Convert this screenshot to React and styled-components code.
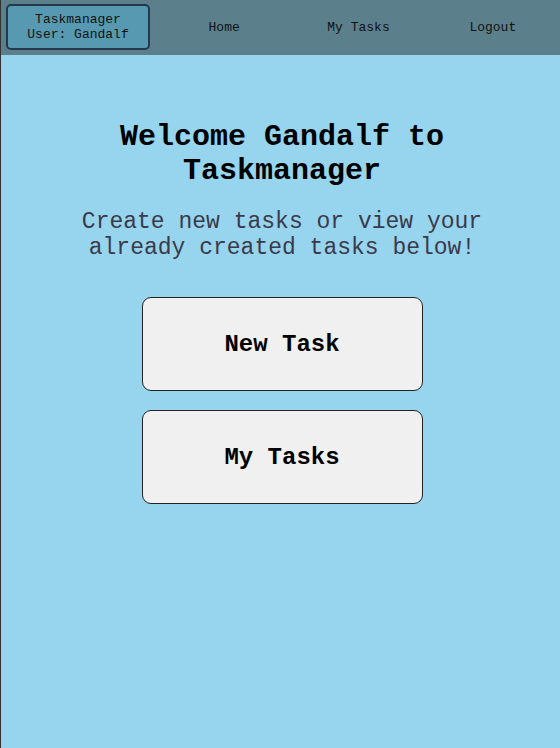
import React from "react";
import styled, { createGlobalStyle } from "styled-components";

const GlobalStyle = createGlobalStyle`
  body {
    margin: 0;
    background: #97d4ed;
    font-family: "Liberation Mono", "Courier New", monospace;
  }
`;

const Page = styled.div`
  min-height: 748px;
  border-left: 1px solid #333;
  background: #97d4ed;
  box-sizing: border-box;
`;

const NavBar = styled.nav`
  height: 55px;
  background: #5b7f8b;
  display: flex;
  align-items: center;
  padding: 0 0 1px 5px;
  box-sizing: border-box;
`;

const Brand = styled.div`
  width: 144px;
  height: 46px;
  box-sizing: border-box;
  border: 2px solid #24394a;
  border-radius: 5px;
  background: #5799b0;
  display: flex;
  flex-direction: column;
  align-items: center;
  justify-content: center;
  font-size: 13px;
  line-height: 15px;
  color: #111;
`;

const Links = styled.div`
  flex: 1;
  display: flex;
  margin-left: 7px;
`;

const NavLink = styled.a`
  flex: 1;
  text-align: center;
  font-size: 13px;
  color: #111;
  text-decoration: none;
  cursor: pointer;
`;

const Main = styled.main`
  display: flex;
  flex-direction: column;
  align-items: center;
  padding: 65px 0 0 3px;
`;

const Intro = styled.div`
  max-width: 440px;
  text-align: center;
`;

const Heading = styled.h1`
  margin: 0;
  font-size: 30px;
  line-height: 34px;
  font-weight: bold;
  color: #000;
`;

const Subtitle = styled.p`
  margin: 21px 0 0;
  font-size: 23px;
  line-height: 26px;
  color: #3a3a4a;
`;

const Actions = styled.div`
  display: flex;
  flex-direction: column;
  gap: 19px;
  margin-top: 36px;
`;

const ActionButton = styled.button`
  width: 281px;
  height: 94px;
  box-sizing: border-box;
  background: #f0f0f0;
  border: 1px solid #222;
  border-radius: 9px;
  font-family: inherit;
  font-size: 24px;
  font-weight: bold;
  color: #000;
  cursor: pointer;
`;

export default function App() {
  return (
    <>
      <GlobalStyle />
      <Page>
        <NavBar>
          <Brand>
            <span>Taskmanager</span>
            <span>User: Gandalf</span>
          </Brand>
          <Links>
            <NavLink>Home</NavLink>
            <NavLink>My Tasks</NavLink>
            <NavLink>Logout</NavLink>
          </Links>
        </NavBar>
        <Main>
          <Intro>
            <Heading>Welcome Gandalf to Taskmanager</Heading>
            <Subtitle>Create new tasks or view your already created tasks below!</Subtitle>
          </Intro>
          <Actions>
            <ActionButton>New Task</ActionButton>
            <ActionButton>My Tasks</ActionButton>
          </Actions>
        </Main>
      </Page>
    </>
  );
}
